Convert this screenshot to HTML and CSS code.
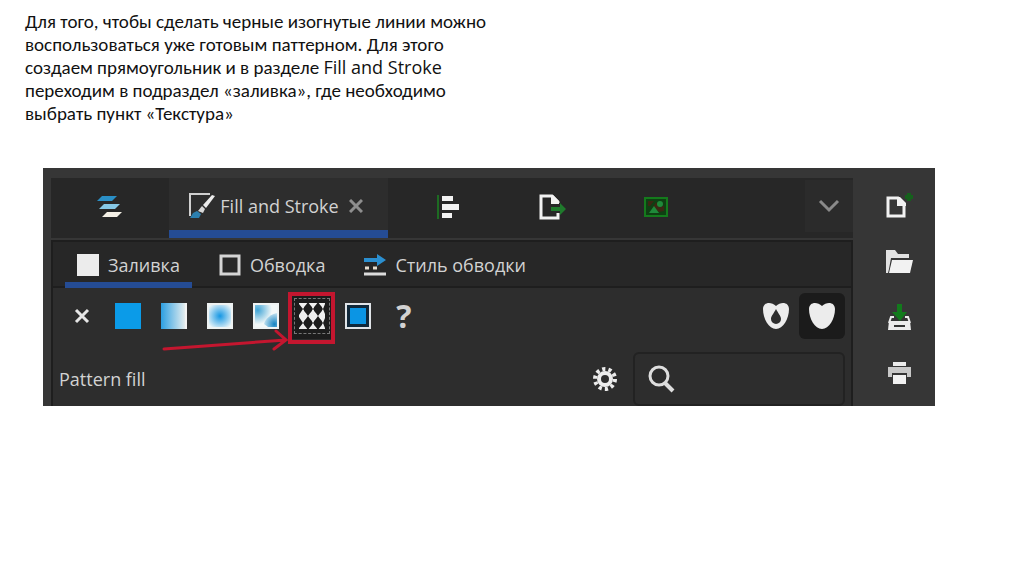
FILE: index.html
```
<!DOCTYPE html>
<html lang="ru">
<head>
    <meta charset="UTF-8">
    <meta name="viewport" content="width=device-width, initial-scale=1.0">
    <title>Fill and Stroke</title>
    <link rel="stylesheet" href="styles.css">
</head>
<body>
    <main class="slide">
        <p class="slide-text">
            Для того, чтобы сделать черные изогнутые линии можно<br>
            воспользоваться уже готовым паттерном. Для этого<br>
            создаем прямоугольник и в разделе <span class="ui-name">Fill and Stroke</span><br>
            переходим в подраздел «заливка», где необходимо<br>
            выбрать пункт «Текстура»
        </p>

        <div class="window">
            <section class="dock">
                <nav class="dock-tabs">
                    <button class="dock-tab first" aria-label="Layers">
                        <svg width="26" height="26" viewBox="0 0 26 26">
                            <path d="M5 2h15l-5 5H0z" fill="#2a8fc6"/>
                            <path d="M7 10h16l-5 5H2z" fill="#86c8e6"/>
                            <path d="M10 18h15l-5 5H5z" fill="#f4f0e6"/>
                        </svg>
                    </button>
                    <button class="dock-tab active">
                        <svg width="26" height="26" viewBox="0 0 26 26">
                            <path d="M21 1H1v22" fill="none" stroke="#d0d0d0" stroke-width="2"/>
                            <path d="M26 3l-3-1-9 10 3 3z" fill="#ececec"/>
                            <path d="M13 13l3 3-2 4-5-2z" fill="#d8d8d8"/>
                            <path d="M8 18l4 3-2 4H1l3-5z" fill="#2c7fae"/>
                        </svg>
                        <span>Fill and Stroke</span>
                        <svg class="close" width="14" height="14" viewBox="0 0 14 14">
                            <path d="M1 1l12 12M13 1L1 13" stroke="#8e8e8e" stroke-width="3"/>
                        </svg>
                    </button>
                    <button class="dock-tab" aria-label="Align">
                        <svg width="26" height="26" viewBox="0 0 26 26">
                            <path d="M3 1v24" stroke="#1d6b22" stroke-width="2"/>
                            <path d="M7 2h11v5H7zM7 10h17v6H7zM7 19h10v5H7z" fill="#f2f2f2"/>
                        </svg>
                    </button>
                    <button class="dock-tab" aria-label="Export">
                        <svg width="28" height="26" viewBox="0 0 28 26">
                            <path d="M20 9V8l-6-6H3v22h17v-5" fill="none" stroke="#f2f2f2" stroke-width="3"/>
                            <path d="M13 1h2l6 6v3h-8z" fill="#f2f2f2"/>
                            <path d="M13 13h9V9l6 6-6 6v-4h-9z" fill="#1f7a2c"/>
                        </svg>
                    </button>
                    <button class="dock-tab" aria-label="Image">
                        <svg width="26" height="26" viewBox="0 0 26 26">
                            <path d="M2 4h22v18H2z" fill="#0f3f13" stroke="#147a1c" stroke-width="2"/>
                            <path d="M5 7h6l-4 5H5zM13 8l-3 5 6 5 5-1v-5l-5 1z" fill="#3b2713"/>
                            <circle cx="17" cy="10" r="3" fill="#1f8a3a"/>
                            <path d="M6 19l5-7 5 7z" fill="#1f8a3a"/>
                        </svg>
                    </button>
                    <button class="dock-menu" aria-label="Show tabs">
                        <svg width="22" height="14" viewBox="0 0 22 14">
                            <path d="M2 2l9 9 9-9" fill="none" stroke="#8a8a8a" stroke-width="3"/>
                        </svg>
                    </button>
                </nav>

                <div class="panel">
                    <nav class="sub-tabs">
                        <button class="sub-tab active">
                            <svg width="22" height="22" viewBox="0 0 22 22">
                                <path d="M0 0h22v22H0z" fill="#ececec"/>
                            </svg>
                            <span>Заливка</span>
                        </button>
                        <button class="sub-tab">
                            <svg width="22" height="22" viewBox="0 0 22 22">
                                <path d="M2 2h18v18H2z" fill="none" stroke="#d4d4d4" stroke-width="3"/>
                            </svg>
                            <span>Обводка</span>
                        </button>
                        <button class="sub-tab">
                            <svg width="22" height="22" viewBox="0 0 22 22">
                                <path d="M0 4h13V0l9 6-9 6V8H0z" fill="#2b8fd0"/>
                                <path d="M1 14h4M9 14h4" stroke="#e6ded0" stroke-width="3"/>
                                <path d="M0 20h22" stroke="#dcdcdc" stroke-width="3"/>
                            </svg>
                            <span>Стиль обводки</span>
                        </button>
                    </nav>

                    <div class="fill-types">
                        <button class="fill-type" aria-label="No paint">
                            <svg width="26" height="26" viewBox="0 0 26 26">
                                <path d="M7 7l12 12M19 7L7 19" stroke="#e6e6e6" stroke-width="3"/>
                            </svg>
                        </button>
                        <button class="fill-type" aria-label="Flat color">
                            <svg width="26" height="26" viewBox="0 0 26 26">
                                <path d="M0 0h26v26H0z" fill="#0b9be8"/>
                            </svg>
                        </button>
                        <button class="fill-type" aria-label="Linear gradient">
                            <svg width="26" height="26" viewBox="0 0 26 26">
                                <defs>
                                    <linearGradient id="linear">
                                        <stop offset="0" stop-color="#2c9fe2"/>
                                        <stop offset="1" stop-color="#f4f4f0"/>
                                    </linearGradient>
                                </defs>
                                <path d="M0 0h26v26H0z" fill="url(#linear)"/>
                                <path d="M25 0v26" stroke="#f4f4f4" stroke-width="2"/>
                            </svg>
                        </button>
                        <button class="fill-type" aria-label="Radial gradient">
                            <svg width="26" height="26" viewBox="0 0 26 26">
                                <defs>
                                    <radialGradient id="radial" r=".6">
                                        <stop offset="0" stop-color="#1597e4"/>
                                        <stop offset="1" stop-color="#eef6f8"/>
                                    </radialGradient>
                                </defs>
                                <path d="M1 1h24v24H1z" fill="url(#radial)" stroke="#eef2f2" stroke-width="2"/>
                            </svg>
                        </button>
                        <button class="fill-type" aria-label="Mesh gradient">
                            <svg width="26" height="26" viewBox="0 0 26 26">
                                <defs>
                                    <radialGradient id="mesh-a" cx=".15" cy=".25" r=".6">
                                        <stop offset="0" stop-color="#3fa4d6"/>
                                        <stop offset="1" stop-color="#f2f8f8"/>
                                    </radialGradient>
                                    <radialGradient id="mesh-b" cx=".8" cy=".8" r=".9">
                                        <stop offset="0" stop-color="#1583c2"/>
                                        <stop offset="1" stop-color="#d8eef6"/>
                                    </radialGradient>
                                </defs>
                                <path d="M1 1h24v24H1z" fill="url(#mesh-a)"/>
                                <path d="M24 10c-5 1-12 5-13 11l4 3h9z" fill="url(#mesh-b)"/>
                                <path d="M1 1h24v24H1z" fill="none" stroke="#f0f4f4" stroke-width="2"/>
                            </svg>
                        </button>
                        <button class="fill-type selected" aria-label="Pattern">
                            <svg width="26" height="26" viewBox="0 0 26 26">
                                <path d="M0 0h26v26H0z" fill="#efefef"/>
                                <g fill="#1c1c1c">
                                    <circle cx="9" cy="6" r="4"/>
                                    <circle cx="19" cy="6" r="4"/>
                                    <circle cx="9" cy="20" r="4"/>
                                    <circle cx="19" cy="20" r="4"/>
                                    <path d="M9-1l5 7-5 7-5-7zM19-1l5 7-5 7-5-7zM9 13l5 7-5 7-5-7zM19 13l5 7-5 7-5-7z"/>
                                    <path d="M0 1l4 5-4 6zM26 1l-2 5 2 5zM0 14l4 6-4 5zM26 15l-2 5 2 5z"/>
                                </g>
                            </svg>
                        </button>
                        <button class="fill-type" aria-label="Swatch">
                            <svg width="26" height="26" viewBox="0 0 26 26">
                                <path d="M1 1h24v24H1z" fill="#10283a" stroke="#e0e4e8" stroke-width="2"/>
                                <path d="M5 5h16v16H5z" fill="#0b95e4"/>
                            </svg>
                        </button>
                        <button class="fill-type unset" aria-label="Unset paint">?</button>

                        <button class="fill-rule" aria-label="Fill rule even-odd">
                            <svg width="28" height="28" viewBox="0 0 28 28">
                                <path fill-rule="evenodd" d="M14 4C9-1 1 0 1 7c0 10 6 20 13 20s13-10 13-20c0-7-8-8-13-3zM14 7c2 4 5 7 5 10a5 5 0 0 1-10 0c0-3 3-6 5-10z" fill="#ececec"/>
                            </svg>
                        </button>
                        <button class="fill-rule active" aria-label="Fill rule nonzero">
                            <svg width="28" height="28" viewBox="0 0 28 28">
                                <path d="M14 4C9-1 1 0 1 7c0 10 6 20 13 20s13-10 13-20c0-7-8-8-13-3z" fill="#ececec"/>
                            </svg>
                        </button>

                        <!-- red pointer to the pattern button -->
                        <svg class="pointer" width="180" height="64" viewBox="0 0 180 64">
                            <g fill="none" stroke="#c4162f">
                                <path d="M129 6h43v48h-43z" stroke-width="4"/>
                                <path d="M3 61l122-9M115 43l10 9-12 9" stroke-width="3" stroke-linecap="round"/>
                            </g>
                        </svg>
                    </div>

                    <div class="pattern-row">
                        <label for="pattern-search">Pattern fill</label>
                        <button class="settings" aria-label="Settings">
                            <svg width="24" height="24" viewBox="0 0 24 24">
                                <circle cx="12" cy="12" r="6" fill="none" stroke="#ececec" stroke-width="4"/>
                                <circle cx="12" cy="12" r="10" fill="none" stroke="#ececec" stroke-width="4" stroke-dasharray="3.2 3.083"/>
                            </svg>
                        </button>
                        <div class="search">
                            <svg width="28" height="28" viewBox="0 0 28 28">
                                <circle cx="12" cy="11" r="9" fill="none" stroke="#dedede" stroke-width="3"/>
                                <path d="M18 18l8 8" stroke="#dedede" stroke-width="4"/>
                            </svg>
                            <input type="text" id="pattern-search">
                        </div>
                    </div>
                </div>
            </section>

            <aside class="commands">
                <button aria-label="New document">
                    <svg width="28" height="28" viewBox="0 0 28 28">
                        <path d="M3 6h10l6 6v12H3z" fill="none" stroke="#f2f2f2" stroke-width="3"/>
                        <path d="M12 5h3l6 6v3h-9z" fill="#f2f2f2"/>
                        <path d="M24 1v8M20 5h8" stroke="#15601c" stroke-width="4"/>
                    </svg>
                </button>
                <button aria-label="Open document">
                    <svg width="28" height="28" viewBox="0 0 28 28">
                        <path d="M1 2h9l3 4h11v4H6L4 21l-1 4H1z" fill="#e2e2e2"/>
                        <path d="M7 12h21l-3 13H4z" fill="#f2f2f2"/>
                    </svg>
                </button>
                <button aria-label="Save document">
                    <svg width="28" height="28" viewBox="0 0 28 28">
                        <path d="M4 17h21l1 9H3z" fill="#ececec"/>
                        <path d="M4 19l2-6h3M25 19l-2-6h-3" fill="none" stroke="#ececec" stroke-width="2"/>
                        <path d="M9 22h11" stroke="#333" stroke-width="2"/>
                        <path d="M12 0h5v8h5l-7 9-8-9h5z" fill="#127a1c"/>
                    </svg>
                </button>
                <button aria-label="Print">
                    <svg width="28" height="28" viewBox="0 0 28 28">
                        <path d="M8 2h13v4H8z" fill="#ececec"/>
                        <path d="M3 7h23v10h-4v-4H7v4H3z" fill="#c8c8c8"/>
                        <path d="M8 15h13v9H8z" fill="#f2f2f2"/>
                    </svg>
                </button>
            </aside>
        </div>
    </main>
</body>
</html>
```
FILE: styles.css
```
:root {
    --window-bg: #363636;
    --dark-bg: #272727;
    --panel-bg: #2d2d2d;
    --line-color: #1e1e1e;
    --accent-color: #254c94;
    --text-color: #d2d2d2;
}

* {
    margin: 0;
    padding: 0;
    box-sizing: border-box;
}

body {
    font-family: 'Open Sans', 'Noto Sans', sans-serif;
    background-color: #fff;
    color: #111;
}

button {
    border: none;
    background: none;
    color: inherit;
    font: inherit;
    cursor: pointer;
}

svg {
    display: block;
    flex: none;
}

.slide {
    padding: 10px 89px 0 43px;
}

.slide-text {
    margin-left: -18px;
    font-family: Calibri, Carlito, 'Open Sans', sans-serif;
    font-size: 19px;
    line-height: 23px;
    white-space: nowrap;
}

.ui-name {
    font-family: 'Segoe UI', 'Open Sans', sans-serif;
    font-size: 18px;
    line-height: 22px;
}

.window {
    display: flex;
    margin-top: 43px;
    padding: 10px 0 0 8px;
    background-color: var(--window-bg);
    color: var(--text-color);
    font-size: 18px;
    overflow: hidden;
}

.dock {
    flex: 1;
    min-width: 0;
}

.dock-tabs {
    display: flex;
    height: 60px;
    padding-bottom: 2px;
    background-color: var(--dark-bg);
}

.dock-tab {
    display: flex;
    align-items: center;
    justify-content: center;
    width: 104px;
}

.dock-tab.first {
    width: 118px;
}

.dock-tab.active {
    width: 219px;
    height: 60px;
    margin-right: 8px;
    padding-top: 4px;
    gap: 5px;
    background-color: var(--panel-bg);
    border-bottom: 8px solid var(--accent-color);
    white-space: nowrap;
}

.close {
    margin: 0 5px;
}

.dock-menu {
    display: flex;
    align-items: center;
    justify-content: center;
    width: 48px;
    height: 52px;
    margin: 2px 0 0 auto;
    background-color: #2b2b2b;
}

.panel {
    margin-top: 2px;
    background-color: var(--panel-bg);
    border: 2px solid var(--line-color);
    border-bottom: none;
}

.sub-tabs {
    display: flex;
    gap: 15px;
    height: 46px;
    padding-left: 12px;
    background-color: var(--dark-bg);
    border-bottom: 2px solid var(--line-color);
}

.sub-tab {
    display: flex;
    align-items: center;
    gap: 9px;
    height: 46px;
    padding: 6px 12px 0;
    border-bottom: 6px solid transparent;
    white-space: nowrap;
}

.sub-tab.active {
    border-bottom-color: var(--accent-color);
}

.fill-types {
    position: relative;
    display: flex;
    align-items: center;
    height: 56px;
    padding: 0 6px;
}

.fill-type {
    display: flex;
    align-items: center;
    justify-content: center;
    width: 46px;
    height: 46px;
}

.fill-type.selected {
    background-color: #1c1c1c;
    outline: 1px dashed #777;
    outline-offset: -6px;
}

.unset {
    font-size: 32px;
    font-weight: 700;
    line-height: 46px;
}

.fill-rule {
    display: flex;
    align-items: center;
    justify-content: center;
    width: 46px;
    height: 46px;
    border-radius: 6px;
}

.unset + .fill-rule {
    margin-left: auto;
}

.fill-rule.active {
    background-color: #1b1b1b;
}

.pointer {
    position: absolute;
    top: 0;
    left: 108px;
    pointer-events: none;
}

.pattern-row {
    display: flex;
    align-items: center;
    height: 62px;
    padding: 8px 6px 0;
}

.settings {
    margin: 0 16px 0 auto;
}

.search {
    display: flex;
    align-items: center;
    width: 212px;
    height: 54px;
    padding-left: 12px;
    border: 2px solid #222;
    border-radius: 6px;
}

.search input {
    flex: 1;
    min-width: 0;
    height: 100%;
    border: none;
    outline: none;
    background: none;
    color: inherit;
    font: inherit;
}

.commands {
    display: flex;
    flex-direction: column;
    align-items: center;
    gap: 28px;
    width: 82px;
    padding: 14px 0 0 10px;
}
```
